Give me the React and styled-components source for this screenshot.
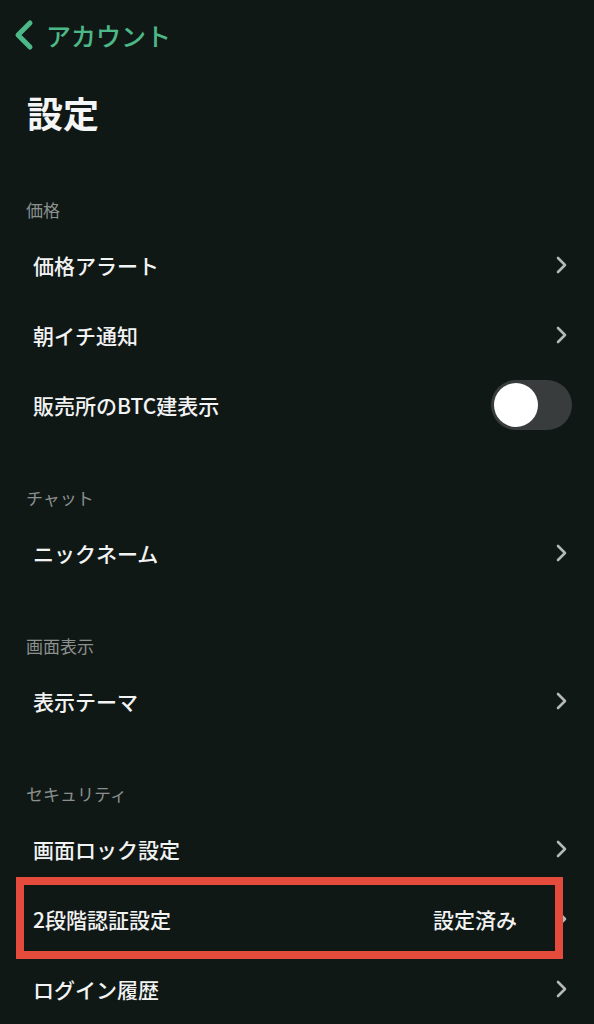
import React from "react";
import styled, { createGlobalStyle } from "styled-components";

const GlobalStyle = createGlobalStyle`
  html, body {
    margin: 0;
    padding: 0;
    background: #101816;
  }
  body {
    font-family: "Noto Sans CJK JP", "Noto Sans", sans-serif;
    color: #f2f3f3;
  }
`;

const Page = styled.div`
  width: 594px;
  min-height: 1024px;
  background: #101816;
  overflow: hidden;
`;

const NavBar = styled.div`
  height: 70px;
  display: flex;
  align-items: center;
  gap: 10px;
  padding-left: 12px;
  color: #4db887;
  font-size: 25px;
  font-weight: 500;
`;

const Title = styled.h1`
  margin: 20px 0 64px 27px;
  font-size: 36px;
  line-height: 44px;
  font-weight: 700;
  color: #f4f5f5;
`;

const SectionHeader = styled.div`
  margin: 46px 0 8px 26px;
  font-size: 17px;
  line-height: 24px;
  color: #8b908e;
`;

const Row = styled.div`
  position: relative;
  height: 70px;
  display: flex;
  align-items: center;
  padding: 0 ${(p) => (p.$toggle ? "22px" : "26px")} 0 33px;
  font-size: 21px;
  font-weight: 500;
`;

const Label = styled.span`
  flex: 1;
`;

const Value = styled.span`
  margin-right: 38px;
  font-size: 21px;
`;

const Track = styled.div`
  width: 81px;
  height: 50px;
  border-radius: 25px;
  background: #383c3d;
  display: flex;
  align-items: center;
  padding-left: 3px;
  box-sizing: border-box;
`;

const Knob = styled.div`
  width: 44px;
  height: 44px;
  border-radius: 50%;
  background: #ffffff;
`;

const Highlight = styled.div`
  position: absolute;
  top: -7px;
  left: 16px;
  right: 31px;
  bottom: -5px;
  border: 8px solid #e44b3d;
  pointer-events: none;
`;

const BackIcon = () => (
  <svg width="24" height="32" viewBox="0 0 24 32">
    <path
      d="M18 4 L6 16 L18 28"
      fill="none"
      stroke="#4db887"
      strokeWidth="5"
      strokeLinecap="round"
      strokeLinejoin="round"
    />
  </svg>
);

const Chevron = () => (
  <svg width="13" height="18" viewBox="0 0 13 18">
    <path
      d="M3 2 L10 9 L3 16"
      fill="none"
      stroke="#b4b8b8"
      strokeWidth="2.6"
      strokeLinecap="round"
      strokeLinejoin="round"
    />
  </svg>
);

const sections = [
  {
    title: "価格",
    rows: [
      { label: "価格アラート" },
      { label: "朝イチ通知" },
      { label: "販売所のBTC建表示", toggle: true },
    ],
  },
  { title: "チャット", rows: [{ label: "ニックネーム" }] },
  { title: "画面表示", rows: [{ label: "表示テーマ" }] },
  {
    title: "セキュリティ",
    rows: [
      { label: "画面ロック設定" },
      { label: "2段階認証設定", value: "設定済み", marked: true },
      { label: "ログイン履歴" },
    ],
  },
];

export default function App() {
  return (
    <Page>
      <GlobalStyle />
      <NavBar>
        <BackIcon />
        <span>アカウント</span>
      </NavBar>
      <Title>設定</Title>
      {sections.map((section) => (
        <div key={section.title}>
          <SectionHeader>{section.title}</SectionHeader>
          {section.rows.map((row) => (
            <Row key={row.label} $toggle={row.toggle}>
              <Label>{row.label}</Label>
              {row.value && <Value>{row.value}</Value>}
              {row.toggle ? (
                <Track>
                  <Knob />
                </Track>
              ) : (
                <Chevron />
              )}
              {row.marked && <Highlight />}
            </Row>
          ))}
        </div>
      ))}
    </Page>
  );
}
